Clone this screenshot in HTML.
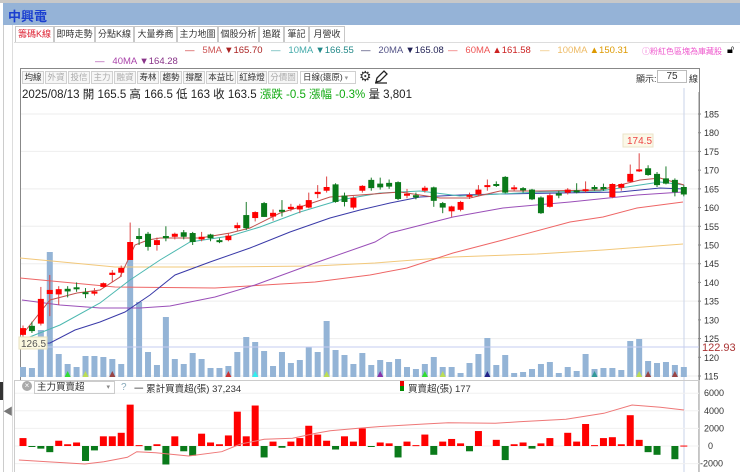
<!DOCTYPE html>
<html><head><meta charset="utf-8">
<style>
*{margin:0;padding:0;box-sizing:border-box}
body{width:740px;height:472px;overflow:hidden;background:#fff;font-family:"Liberation Sans","Noto Sans CJK TC",sans-serif;position:relative;font-size:11px;color:#333}
.abs{position:absolute;white-space:nowrap}
#top{left:0;top:0;width:740px;height:3px;background:#c8c8c8}
#title{left:0;top:3px;width:740px;height:22px;background:#95b3d7}
#title span{position:absolute;left:8px;top:3px;color:#1a3fd0;font-weight:bold;font-size:13px}
.tab{position:absolute;top:26px;height:16px;border:1px solid #c8c8c8;border-bottom:none;font-size:9px;line-height:15px;color:#333;background:#fff;text-align:center;overflow:hidden;white-space:nowrap}
.tb{position:absolute;top:71px;height:13px;border:1px solid #d0d0d0;font-size:8.5px;line-height:11px;color:#333;background:#f6f6f6;text-align:center;overflow:hidden;white-space:nowrap}
.tb.g{color:#aaa}
.leg{font-size:9.5px;top:45px}
</style></head><body>
<div class="abs" id="top"></div>
<div class="abs" id="title"><span>中興電</span></div>
<div class="abs" style="left:0;top:3px;width:3px;height:22px;background:#fff"></div>
<div class="abs" style="left:0;top:25px;width:4px;height:447px;border-right:1px solid #ccc"></div>
<div class="abs" style="left:0;top:382px;width:3px;height:18px;background:#333"></div>
<div class="abs" style="left:3px;top:403px;color:#777;font-size:10px">◀</div>
<div class="abs" style="left:12px;top:25px;width:1px;height:447px;background:#ddd"></div>

<div class="tab" style="left:15px;color:#d23;width:39px">籌碼K線</div>
<div class="tab" style="left:54px;width:41px">即時走勢</div>
<div class="tab" style="left:95px;width:39px">分點K線</div>
<div class="tab" style="left:134px;width:43px">大量券商</div>
<div class="tab" style="left:177px;width:41px">主力地圖</div>
<div class="tab" style="left:218px;width:41px">個股分析</div>
<div class="tab" style="left:259px;width:25px">追蹤</div>
<div class="tab" style="left:284px;width:25px">筆記</div>
<div class="tab" style="left:309px;width:36px">月營收</div>
<div class="abs" style="left:14px;top:42px;width:726px;height:1px;background:#ddd"></div>

<div class="abs leg" style="left:185px;color:#c33">—&nbsp;&nbsp; <span style="color:#c55">5MA</span> <span style="color:#a22">▼165.70</span></div>
<div class="abs leg" style="left:271px;color:#4aa"><span>—&nbsp;&nbsp; </span><span>10MA</span> <span style="color:#288">▼166.55</span></div>
<div class="abs leg" style="left:361px;color:#336">—&nbsp;&nbsp; <span style="color:#558">20MA</span> <span style="color:#225">▼165.08</span></div>
<div class="abs leg" style="left:448px;color:#e55">—&nbsp;&nbsp; 60MA <span style="color:#c22">▲161.58</span></div>
<div class="abs leg" style="left:540px;color:#eb6">—&nbsp;&nbsp; 100MA <span style="color:#d90">▲150.31</span></div>
<div class="abs leg" style="left:642px;color:#e5c;font-size:8px;top:46px">ⓘ粉紅色區塊為庫藏股</div>
<div class="abs" style="left:727px;top:44px;font-size:11px;color:#000">🔓︎</div>
<div class="abs leg" style="left:95px;top:56px;color:#a4a">—&nbsp;&nbsp; 40MA <span style="color:#838">▼164.28</span></div>

<div class="abs" style="left:20px;top:68px;width:680px;height:312px;border:1px solid #888;border-bottom:none"></div>
<div class="tb" style="left:22px;width:22px">均線</div>
<div class="tb g" style="left:45px;width:22px">外資</div>
<div class="tb g" style="left:68px;width:22px">投信</div>
<div class="tb g" style="left:91px;width:22px">主力</div>
<div class="tb g" style="left:114px;width:22px">融資</div>
<div class="tb" style="left:137px;width:22px">寿林</div>
<div class="tb" style="left:160px;width:22px">趨勢</div>
<div class="tb" style="left:183px;width:22px">撐壓</div>
<div class="tb" style="left:206px;width:30px">本益比</div>
<div class="tb" style="left:237px;width:30px">紅綠燈</div>
<div class="tb g" style="left:268px;width:30px">分價圖</div>
<div class="tb" style="left:300px;width:56px;background:#fff;text-align:left;padding-left:2px">日線(還原)<span style="color:#999;font-size:7px"> ▾</span></div>
<div class="abs" style="left:359px;top:68px;font-size:14px;color:#333">⚙</div>
<svg class="abs" style="left:374px;top:70px" width="14" height="14"><path d="M2 12 L3 8 L10 1 L13 4 L6 11 Z M1 13 L13 13" fill="none" stroke="#222" stroke-width="1.3"/></svg>
<div class="abs" style="left:636px;top:72px;font-size:9px">顯示:</div>
<div class="abs" style="left:657px;top:70px;width:30px;height:13px;border:1px solid #bbb;font-size:10px;text-align:center;line-height:11px">75</div>
<div class="abs" style="left:689px;top:72px;font-size:9px">線</div>
<div class="abs" style="left:22px;top:86px;font-size:11.5px;color:#222">2025/08/13 開 165.5 高 166.5 低 163 收 163.5 <span style="color:#1a1">漲跌 -0.5 漲幅 -0.3%</span> 量 3,801</div>

<svg id="ch" class="abs" style="left:0;top:0" width="740" height="472"></svg>

<div class="abs" style="left:14px;top:380px;width:686px;height:92px;border:1px solid #ccc;border-bottom:none"></div>
<div class="abs" style="left:22px;top:381px;width:10px;height:10px;border-radius:50%;background:#aaa;color:#fff;font-size:8px;line-height:10px;text-align:center">×</div>
<div class="abs" style="left:34px;top:381px;width:81px;height:13px;border:1px solid #ccc;font-size:9.5px;line-height:11px;padding-left:2px">主力買賣超<span style="position:absolute;right:4px;color:#888;font-size:7px">▾</span></div>
<div class="abs" style="left:121px;top:382px;font-size:10px;color:#8ab">?</div>
<div class="abs" style="left:134px;top:381px;font-size:9.5px;color:#333">一 累計買賣超(張) 37,234</div>
<div class="abs" style="left:400px;top:381px;width:4px;height:5px;background:#e00"></div>
<div class="abs" style="left:400px;top:386px;width:4px;height:5px;background:#080"></div>
<div class="abs" style="left:408px;top:381px;font-size:9.5px;color:#333">買賣超(張) 177</div>

<script>
var s='';
function Y(p){return 114+(185-p)*3.743;}
function X(i){return 23+i*8.93;}
for(var p=185;p>=115;p-=10){s+='<line x1="21" x2="698" y1="'+Y(p)+'" y2="'+Y(p)+'" stroke="#eee"/>';}
for(var p=185;p>=115;p-=5){s+='<line x1="698" x2="701" y1="'+Y(p)+'" y2="'+Y(p)+'" stroke="#888"/><text x="704" y="'+(Y(p)+3.5)+'" font-size="9" fill="#333">'+p+'</text>';}
s+='<line x1="699" x2="699" y1="92" y2="472" stroke="#888"/>';
s+='<line x1="684" x2="684" y1="88" y2="472" stroke="#c9d3ea"/>';
var vt=[367,368,330,252,354,364,367,356,356,357,359,364,260,302,352,365,317,359,364,353,359,368,368,366,352,337,342,351,366,352,363,360,347,352,321,350,355,364,353,365,360,362,359,367,369,364,357,367,367,373,363,354,338,365,355,373,372,369,364,362,373,367,371,354,369,368,368,370,341,339,361,363,362,365,367];
for(var i=0;i<75;i++){s+='<rect x="'+(X(i)-3)+'" y="'+vt[i]+'" width="6" height="'+(377-vt[i])+'" fill="#94b4d6"/>';}
s+='<line x1="21" x2="699" y1="347" y2="347" stroke="#c6cdf0"/>';
s+='<text x="702" y="351" font-size="11" fill="#a33">122.93</text>';
function pl(pts,c){s+='<polyline fill="none" stroke="'+c+'" stroke-width="1" points="'+pts+'"/>';}
pl('20,258 115,267 215,267 315,266 375,263 453,257 537,254 603,250 683,244','#f2c87a');
pl('20,278 115,287 215,288 315,282 370,275 407,268 453,253 503,240 570,222 603,217 637,208 683,202','#e66');
pl('22,300 60,305 100,308 140,308 170,306 215,297 255,285 315,263 375,242 390,233 453,217 503,208 570,202 637,195 683,192','#9a4fb8');
pl('22,345 50,343 75,330 100,322 125,312 150,295 175,275 210,262 250,248 290,232 330,218 360,210 390,203 420,197 460,195 500,194 560,193 620,192 660,188 684,189','#3a3aa8');
pl('22,340 60,325 100,303 130,280 160,260 190,242 230,236 260,227 300,212 340,200 380,193 420,191 460,196 500,194 540,192 600,191 640,185 660,182 684,185','#4cb8b0');
pl('22,335 50,300 77,293 100,290 120,277 135,245 148,240 160,238 200,238 230,233 250,228 280,213 300,207 330,197 360,195 400,192 440,198 470,198 500,191 540,191 600,190 640,180 660,178 684,185','#c0504d');
var d=[['r',127.8,126,128.5,125.5],['g',128.4,127,129.5,126.5],['r',135.6,129,138.8,128.5],['r',138,136.9,142,131],['r',138.2,136.8,139,134],['g',138.3,137.6,139,136],['g',138.7,138.2,140,137.5],['g',137.4,137,138.5,135.8],['r',137.6,137,138.5,136.5],['r',139.8,138.8,140,138.5],['r',142.6,142,143.3,140],['r',143.9,142.6,144.5,141.5],['r',150.8,146,156,146],['g',152.4,151.6,154.5,150],['g',153,149.5,153.5,148.5],['r',151.3,150,152,148.5],['g',152.4,151.8,155,151],['r',153,152.2,153.3,151.5],['g',153.4,152.2,154,151.5],['g',153.2,150.8,153.5,150],['r',152.2,151.5,153.5,151],['g',152.8,151.8,153,151],['g',151.3,150.9,151.8,150.5],['r',152.5,151.3,153.2,151],['r',155.3,154.5,156,153.8],['g',158,154.5,161.5,154],['r',158.8,157.2,159,156.3],['g',161.2,157.5,161.5,157.5],['r',158.6,157.6,159.5,156.5],['g',159.4,159.1,162,157.6],['r',160.2,159.6,161,159],['r',160.5,159.5,161,158.5],['r',162,160,164,159.8],['r',164.2,163.6,166,162.5],['r',165.5,164.5,168.3,164],['g',166.2,161.5,166.5,161.3],['g',163.2,161.5,164,160.3],['r',162.6,160,163,159.5],['r',165.8,164.5,166,164],['g',167.4,165.2,168,164.5],['g',166.4,165.4,168,164.8],['g',166.6,165.6,167.5,165],['g',166.8,162.3,167,162],['r',163.7,163.3,165,162.5],['g',163.3,162.7,164,162.2],['r',165.3,164.5,165.8,164],['g',165.4,161.8,165.6,160.2],['g',161.2,160,161.5,158.5],['r',160.3,159,160.5,157.5],['r',161.5,159.4,161.8,159],['r',163.4,163,164,162.3],['r',164.8,163.5,166,163],['r',166,165.7,167.5,164.5],['g',166.3,165.8,167,165.5],['g',168.2,164,168.4,163.8],['r',165.4,165,166,164.5],['g',165.2,164.6,165.5,164],['g',164.8,162.2,165,162],['g',162.7,158.5,163,158.3],['r',163.3,160.2,163.8,160],['g',163.8,163.2,164.5,162.5],['r',164.8,164,165.2,163.5],['g',164.6,164.3,166.5,163.8],['r',164.9,164.6,167,164],['g',165.5,164.9,166,164.5],['g',165.5,164.9,166.4,164.5],['r',166.3,162.8,166.5,162.5],['r',166.3,165.3,166.5,164.5],['r',169,166.9,171.5,166.7],['r',170.2,169.7,174.5,169.5],['g',170.5,168.7,171.3,168.5],['g',169,166,169.5,165.5],['g',167.8,166.4,171,166.2],['g',167.4,164.1,167.8,163],['g',165.5,163.5,166,163]];
for(var i=0;i<d.length;i++){var c=d[i],x=X(i),col=c[0]=='r'?'#f00':'#0a7a1a',wc=c[0]=='r'?'#d44':'#1a7a2a';
 s+='<line x1="'+x+'" x2="'+x+'" y1="'+Y(c[3])+'" y2="'+Y(c[4])+'" stroke="'+wc+'"/>';
 var t=Y(c[1]),b=Y(c[2]);if(b-t<2)b=t+2;
 s+='<rect x="'+(x-3)+'" y="'+t+'" width="6" height="'+(b-t)+'" fill="'+col+'"/>';}
s+='<rect x="19" y="337" width="28" height="12" fill="#fbf8e0" stroke="#e8e2c0"/><text x="21" y="347" font-size="10" fill="#555">126.5</text>';
s+='<rect x="623" y="134" width="30" height="13" fill="#fbf8e8" stroke="#ebe3c8"/><text x="627" y="144" font-size="10" fill="#e44">174.5</text>';
var idx=[5,7,10,23,26,34,40,45,47,52,64,69,70,73];
var cols=['#3d3','#bd5','#944','#c33','#3ee','#bd5','#83a','#3d3','#bd5','#228','#399','#bd5','#944','#944'];
for(var k=0;k<idx.length;k++){var x=X(idx[k]);s+='<polygon points="'+(x-3)+',377 '+(x+3)+',377 '+x+',371" fill="'+cols[k]+'"/>';}
function BY(v){return 446-v*17.6/2000;}
var ax=[6000,4000,2000,0,-2000];
for(var k=0;k<5;k++){s+='<text x="'+(ax[k]<0?700:(ax[k]==0?708:704))+'" y="'+(BY(ax[k])+3)+'" font-size="9" fill="#333">'+ax[k]+'</text>';}
for(var v=6000;v>=-2000;v-=2000){s+='<line x1="15" x2="699" y1="'+BY(v)+'" y2="'+BY(v)+'" stroke="#f0f0f0"/>';}
var bv=[900,-100,-300,-700,600,200,400,-1700,-500,1100,1100,1500,4700,100,-500,200,-2100,1100,-600,-1100,1400,400,200,1200,3900,1100,4600,-1300,500,-200,500,900,2300,1300,600,-400,1100,500,2000,-50,400,300,-1300,500,100,1300,-1000,500,800,300,-600,1700,0,700,-1600,200,400,-300,300,900,0,1500,500,2500,100,900,1000,200,3500,700,-700,-1000,0,-1500,50];
for(var i=0;i<bv.length&&i<75;i++){var v=bv[i],x=X(i);if(v==0)continue;var y0=BY(0),y1=BY(v);
 s+='<rect x="'+(x-3.5)+'" y="'+Math.min(y0,y1)+'" width="7" height="'+Math.max(1,Math.abs(y1-y0))+'" fill="'+(v>0?'#f00':'#0a7a1a')+'"/>';}
var cp=[[40,270],[100,275],[180,282],[220,275],[270,262],[290,245],[330,248],[400,258],[470,245],[510,222],[560,208],[620,205],[670,190],[700,182],[760,175],[800,170],[900,162],[950,158],[1050,160],[1100,155],[1200,148],[1280,130],[1340,105],[1400,112],[1450,120]];
var pts=cp.map(function(q){return (q[0]/2.12).toFixed(1)+','+(370+q[1]/3).toFixed(1);}).join(' ');
pl(pts,'#e77');
document.getElementById('ch').innerHTML=s;
</script>
</body></html>
